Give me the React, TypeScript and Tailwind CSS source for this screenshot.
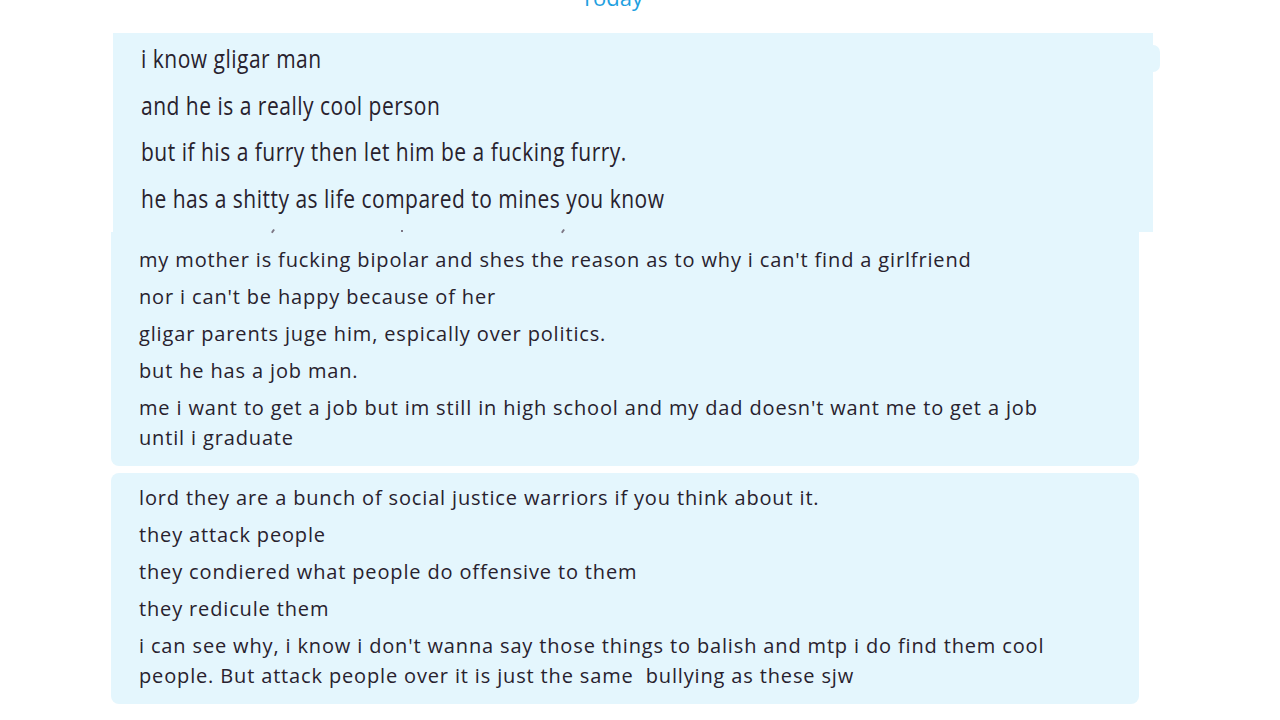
import React from 'react'

const topLines = [
    "i know gligar man",
    "and he is a really cool person",
    "but if his a furry then let him be a fucking furry.",
    "he has a shitty as life compared to mines you know",
];

const midLines = [
    "my mother is fucking bipolar and shes the reason as to why i can't find a girlfriend",
    "nor i can't be happy because of her",
    "gligar parents juge him, espically over politics.",
    "but he has a job man.",
    "me i want to get a job but im still in high school and my dad doesn't want me to get a job until i graduate",
];

const lastLines = [
    "lord they are a bunch of social justice warriors if you think about it.",
    "they attack people",
    "they condiered what people do offensive to them",
    "they redicule them",
    "i can see why, i know i don't wanna say those things to balish and mtp i do find them cool people. But attack people over it is just the same  bullying as these sjw",
];

const font = { fontFamily: '"Open Sans", "Noto Sans", sans-serif' };

const Bubble = ({lines, className}: {lines: string[], className: string}) => (
    <div className={`bg-[#e4f6fd] flex flex-col gap-[7px] pl-[28px] pr-[60px] ${className}`}>
        {lines.map((l, i) => (
            <p key={i} className="text-[20px] leading-[30px] tracking-[0.85px] text-[#28222e] whitespace-pre-wrap">{l}</p>
        ))}
    </div>
);

const App = () => {
    return (
        <div className="w-[1280px] h-[720px] bg-white overflow-hidden" style={font}>
            {/* date header, cut off by the crop */}
            <div className="h-[33px] flex justify-center">
                <span className="text-[22px] leading-[22px] -mt-[14px] ml-[-56px] text-[#1ea0df]">Today</span>
            </div>

            {/* zoomed-in bubble */}
            <div className="relative ml-[113px] w-[1040px] h-[199px] bg-[#e4f6fd] pl-[28px] pt-[7px] flex flex-col gap-[10px]">
                {topLines.map((l, i) => (
                    <p key={i} className="text-[21px] leading-[36.5px] tracking-[0.5px] text-[#28222e] origin-left scale-y-[1.25]">{l}</p>
                ))}
                <div className="absolute right-[-7px] top-[12px] w-[14px] h-[27px] rounded-full bg-[#e4f6fd]"></div>
            </div>

            <div className="ml-[111px] w-[1028px] flex flex-col gap-[7px]">
                <div className="relative">
                    <div className="absolute top-[-3px] left-[161px] w-[1.5px] h-[4px] bg-[#7d7785] rotate-[35deg]"></div>
                    <div className="absolute top-[-2px] left-[290px] w-[2px] h-[2px] bg-[#7d7785]"></div>
                    <div className="absolute top-[-3px] left-[451px] w-[1.5px] h-[4px] bg-[#7d7785] rotate-[35deg]"></div>
                    <Bubble lines={midLines} className="rounded-b-[8px] pt-[13px] pb-[13px]" />
                </div>
                <Bubble lines={lastLines} className="rounded-[8px] pt-[10px] pb-[13px]" />
            </div>
        </div>
    )
}
export default App
